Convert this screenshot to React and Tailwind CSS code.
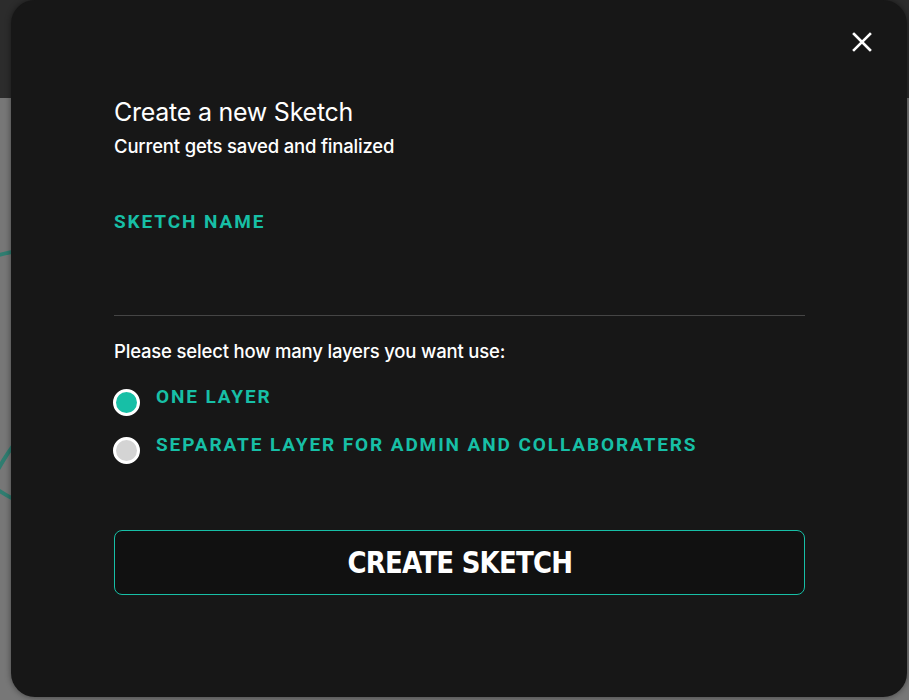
import React from "react";

const Radio = ({ checked, label }) => {
  return (
    <label className="flex items-center gap-[16px] h-[27px] -ml-[1px] cursor-pointer">
      <span
        className={
          checked
            ? "w-[27px] h-[27px] rounded-full border-[3px] border-white bg-[#17bfa6] shrink-0"
            : "w-[27px] h-[27px] rounded-full border-[3px] border-white bg-[#d4d4d4] shrink-0"
        }
      />
      <span className="font-['Roboto',sans-serif] font-bold text-[19px] leading-[24px] tracking-[0.1em] text-[#17bfa6] -mt-[12px]">
        {label}
      </span>
    </label>
  );
};

const App = () => {
  return (
    <div className="relative w-[909px] h-[700px] overflow-hidden bg-[#777777]">
      {/* page behind the dialog */}
      <div className="h-[98px] bg-[#2c2c2c]" />
      <svg className="absolute left-0 top-[230px]" width="60" height="300" viewBox="0 0 60 300">
        <path d="M-10 28 C 5 22, 20 20, 40 18" stroke="#2f7d70" strokeWidth="4" fill="none" />
        <path d="M-5 245 C 2 232, 8 222, 16 212" stroke="#2f7d70" strokeWidth="4" fill="none" />
        <path d="M-5 258 C 4 264, 10 268, 20 272" stroke="#2f7d70" strokeWidth="4" fill="none" />
      </svg>

      {/* dialog */}
      <div className="absolute left-[11px] top-0 w-[896px] h-[697px] rounded-[24px] bg-[#171717] shadow-[0_0_6px_rgba(0,0,0,0.45)] font-['Inter',sans-serif]">
        <button className="absolute right-[35px] top-[32px] w-[20px] h-[20px] flex items-center justify-center text-white">
          <svg width="20" height="20" viewBox="0 0 20 20" fill="none">
            <path d="M2 2 L18 18 M18 2 L2 18" stroke="white" strokeWidth="2.6" strokeLinecap="square" />
          </svg>
        </button>

        <div className="pl-[103px] pr-[102px] pt-[96px]">
          <h2 className="text-white text-[25px] leading-[32px] font-normal tracking-[-0.01em]">
            Create a new Sketch
          </h2>
          <p className="text-white text-[18.5px] leading-[24px] mt-[6px] font-medium tracking-[-0.01em]">
            Current gets saved and finalized
          </p>

          <div className="mt-[52px] font-['Roboto',sans-serif] font-bold text-[19px] leading-[24px] tracking-[0.1em] text-[#17bfa6]">
            SKETCH NAME
          </div>
          <div className="mt-[81px] h-px bg-[#454545]" />

          <p className="mt-[23px] text-white text-[18.5px] leading-[24px] font-medium tracking-[-0.01em]">
            Please select how many layers you want use:
          </p>

          <div className="mt-[26px] flex flex-col gap-[21px]">
            <Radio checked label="ONE LAYER" />
            <Radio label="SEPARATE LAYER FOR ADMIN AND COLLABORATERS" />
          </div>

          <button className="mt-[66px] w-full h-[65px] rounded-[8px] border border-[#17bfa6] bg-[#111111] flex items-center justify-center">
            <span className="inline-block [transform:scaleX(0.84)] font-['DejaVu_Sans',sans-serif] font-bold text-[31px] leading-none tracking-[-0.03em] text-white">
              CREATE SKETCH
            </span>
          </button>
        </div>
      </div>
    </div>
  );
};

export default App;
